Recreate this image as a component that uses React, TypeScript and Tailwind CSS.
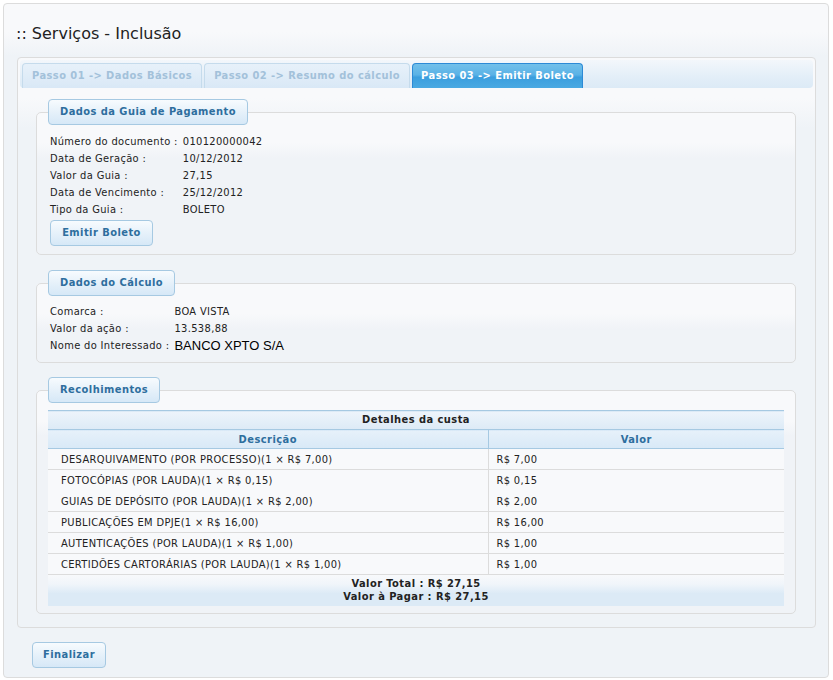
import React from "react";

const FONT = "font-['DejaVu_Sans_Condensed','DejaVu_Sans',sans-serif]";
const BOLD = "font-bold tracking-[0.45px]";
const BTN =
  "border border-[#a6c9e2] rounded-[4px] bg-[linear-gradient(to_bottom,#f7fbfe_0%,#e6f1fa_50%,#d6e8f7_100%)] text-[#2e6e9e]";

function Legend({ children }: { children: React.ReactNode }) {
  return (
    <legend className={`${BTN} ${BOLD} h-[26px] leading-[24px] px-[11px] text-[11px]`}>
      {children}
    </legend>
  );
}

const FIELDSET =
  "border border-[#dcdcdc] rounded-[5px] px-[11px] bg-[linear-gradient(to_bottom,#f8f9fb_0px,#f8f9fb_30px,#f0f3f7_45px,#f0f3f7_100%)]";

const rows = [
  ["DESARQUIVAMENTO (POR PROCESSO)(1 × R$ 7,00)", "R$ 7,00", true],
  ["FOTOCÓPIAS (POR LAUDA)(1 × R$ 0,15)", "R$ 0,15", false],
  ["GUIAS DE DEPÓSITO (POR LAUDA)(1 × R$ 2,00)", "R$ 2,00", true],
  ["PUBLICAÇÕES EM DPJE(1 × R$ 16,00)", "R$ 16,00", true],
  ["AUTENTICAÇÕES (POR LAUDA)(1 × R$ 1,00)", "R$ 1,00", true],
  ["CERTIDÕES CARTORÁRIAS (POR LAUDA)(1 × R$ 1,00)", "R$ 1,00", true],
] as const;

export default function App() {
  return (
    <div className={`w-[833px] h-[680px] bg-white pt-[3px] pl-[3px] ${FONT} text-[#222]`}>
      <div className="w-[826px] h-[675px] border border-[#dcdcdc] rounded-[4px] bg-[linear-gradient(to_bottom,#f8f9fb_0px,#f8f9fb_28px,#eff3f7_52px,#eff3f7_100%)] flex flex-col">
        <h1 className="pt-[18px] pl-[12px] text-[16px] leading-[24px] font-normal text-[#222] font-['DejaVu_Sans',sans-serif]">
          :: Serviços - Inclusão
        </h1>

        {/* Tabs panel */}
        <div className="mt-[11px] ml-[13px] w-[799px] border border-[#dcdcdc] rounded-[4px] p-[2px] bg-[linear-gradient(to_bottom,#f8f9fb_0px,#f8f9fb_40px,#eff3f7_70px,#eff3f7_100%)]">
          <div className="h-[28px] rounded-[4px] bg-[linear-gradient(to_bottom,#f3f7fb_0%,#e3eef8_60%,#dceaf6_100%)] pl-[2px] pt-[3px] flex gap-[2px] items-end">
            <div className={`h-[25px] px-[9px] border border-b-0 border-[#c5dbec] rounded-t-[4px] bg-[linear-gradient(to_bottom,#e7f1fa,#d9e8f6)] text-[#a3c1da] text-[11px] leading-[24px] ${BOLD}`}>
              Passo 01 -&gt; Dados Básicos
            </div>
            <div className={`h-[25px] px-[9px] border border-b-0 border-[#c5dbec] rounded-t-[4px] bg-[linear-gradient(to_bottom,#e7f1fa,#d9e8f6)] text-[#a3c1da] text-[11px] leading-[24px] ${BOLD}`}>
              Passo 02 -&gt; Resumo do cálculo
            </div>
            <div className={`h-[25px] px-[8px] border border-b-0 border-[#2c8ad6] rounded-t-[4px] bg-[linear-gradient(to_bottom,#72c0ea_0%,#5ab2e6_45%,#3a9ede_55%,#4aa9e2_100%)] text-white text-[11px] leading-[24px] ${BOLD}`}>
              Passo 03 -&gt; Emitir Boleto
            </div>
          </div>

          <div className="pl-[16px] pr-[17px] pt-[11px] pb-[11px] text-[11px] tracking-[0.35px]">
            {/* Fieldset 1 */}
            <fieldset className={`${FIELDSET} pb-[8px]`}>
              <Legend>Dados da Guia de Pagamento</Legend>
              <div className="pl-[2px] pt-[8px]">
                <table className="border-collapse">
                  <tbody>
                    {[
                      ["Número do documento :", "010120000042"],
                      ["Data de Geração :", "10/12/2012"],
                      ["Valor da Guia :", "27,15"],
                      ["Data de Vencimento :", "25/12/2012"],
                      ["Tipo da Guia :", "BOLETO"],
                    ].map(([l, v]) => (
                      <tr key={l} className="h-[17px]">
                        <td className="p-0 pr-[5px] leading-[17px] whitespace-nowrap">{l}</td>
                        <td className="p-0 leading-[17px]">{v}</td>
                      </tr>
                    ))}
                  </tbody>
                </table>
                <button className={`${BTN} ${BOLD} mt-[2px] h-[26px] w-[103px] text-[11px] leading-[24px]`}>
                  Emitir Boleto
                </button>
              </div>
            </fieldset>

            {/* Fieldset 2 */}
            <fieldset className={`${FIELDSET} mt-[15px] pb-[7px]`}>
              <Legend>Dados do Cálculo</Legend>
              <div className="pl-[2px] pt-[7px]">
                <table className="border-collapse">
                  <tbody>
                    <tr className="h-[17px]">
                      <td className="p-0 pr-[5px] leading-[17px] whitespace-nowrap">Comarca :</td>
                      <td className="p-0 leading-[17px]">BOA VISTA</td>
                    </tr>
                    <tr className="h-[17px]">
                      <td className="p-0 pr-[5px] leading-[17px] whitespace-nowrap">Valor da ação :</td>
                      <td className="p-0 leading-[17px]">13.538,88</td>
                    </tr>
                    <tr className="h-[18px]">
                      <td className="p-0 pr-[5px] leading-[18px] whitespace-nowrap">Nome do Interessado :</td>
                      <td className="p-0 leading-[18px] text-[13px] tracking-normal font-['Liberation_Sans',Arial,sans-serif] text-black">
                        BANCO XPTO S/A
                      </td>
                    </tr>
                  </tbody>
                </table>
              </div>
            </fieldset>

            {/* Fieldset 3 */}
            <fieldset className={`${FIELDSET} mt-[14px] pb-[7px]`}>
              <Legend>Recolhimentos</Legend>
              <div className="pt-[7px]">
                <table className="w-full border-collapse">
                  <thead>
                    <tr className="h-[19px] border-t border-[#a6c9e2] bg-[linear-gradient(to_bottom,#edf4fb,#dceaf6)]">
                      <th colSpan={2} className={`p-0 text-[11px] leading-[18px] text-[#222] ${BOLD}`}>
                        Detalhes da custa
                      </th>
                    </tr>
                    <tr className="h-[19px] border-t border-b border-[#a6c9e2] bg-[linear-gradient(to_bottom,#e6f1fa,#d9e9f7)]">
                      <th className={`p-0 w-[440px] border-r border-[#a6c9e2] text-[11px] leading-[17px] text-[#2e6e9e] ${BOLD}`}>
                        Descrição
                      </th>
                      <th className={`p-0 text-[11px] leading-[17px] text-[#2e6e9e] ${BOLD}`}>Valor</th>
                    </tr>
                  </thead>
                  <tbody>
                    {rows.map(([d, v, line]) => (
                      <tr
                        key={d}
                        className={`h-[21px] bg-[#f8f9fb] ${line ? "border-b border-[#dcdcdc]" : ""}`}
                      >
                        <td className="p-0 pt-[1px] pl-[13px] leading-[19px] border-r border-[#dcdcdc] whitespace-nowrap">{d}</td>
                        <td className="p-0 pt-[1px] pl-[8px] leading-[19px]">{v}</td>
                      </tr>
                    ))}
                    <tr className="h-[31px] bg-[linear-gradient(to_bottom,#f8f9fb_0%,#f0f5fa_30%,#dceaf6_60%,#dceaf6_100%)]">
                      <td colSpan={2} className={`p-0 text-center text-[11px] leading-[13px] ${BOLD}`}>
                        <div>Valor Total : R$ 27,15</div>
                        <div>Valor à Pagar : R$ 27,15</div>
                      </td>
                    </tr>
                  </tbody>
                </table>
              </div>
            </fieldset>
          </div>
        </div>

        <div className="mt-[13px] ml-[28px]">
          <button className={`${BTN} ${BOLD} h-[26px] w-[74px] text-[11px] leading-[24px]`}>Finalizar</button>
        </div>
      </div>
    </div>
  );
}
